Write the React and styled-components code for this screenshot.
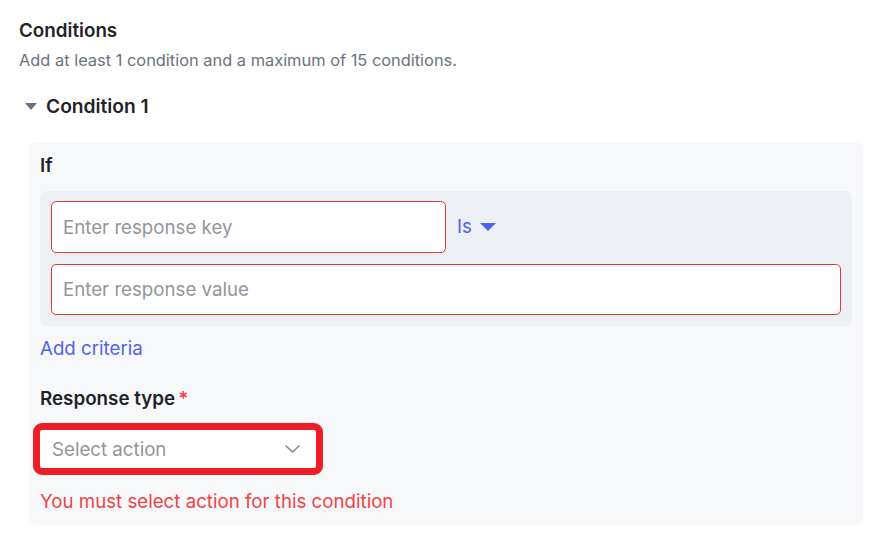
import React from "react";
import styled, { createGlobalStyle } from "styled-components";

const Global = createGlobalStyle`
  html, body { margin: 0; padding: 0; background: #ffffff; }
  body { font-family: Inter, "Noto Sans", "Liberation Sans", sans-serif; color: #1f2329; }
  * { box-sizing: border-box; }
`;

const Page = styled.div`
  padding: 20px 27px 14px 19px;
  display: flex;
  flex-direction: column;
`;

const Title = styled.div`
  font-size: 18.8px;
  line-height: 22px;
  font-weight: 600;
  color: #1f2329;
`;

const Subtitle = styled.div`
  margin-top: 8px;
  font-size: 16.4px;
  line-height: 20px;
  color: #6b7280;
`;

const Toggle = styled.div`
  margin-top: 24px;
  padding-left: 6px;
  display: flex;
  align-items: center;
  gap: 9px;
  font-size: 19.2px;
  line-height: 24px;
  font-weight: 600;
  color: #1f2329;
`;

const Card = styled.div`
  margin-top: 24px;
  margin-left: 10px;
  background: #f7f8fa;
  border-radius: 8px;
  padding: 13px 11px 11px 11px;
  display: flex;
  flex-direction: column;
  align-items: flex-start;
`;

const Label = styled.div`
  font-size: 18.8px;
  line-height: 22px;
  font-weight: 600;
  color: #1f2329;
  margin-top: ${(p) => p.$mt || 0}px;
`;

const Star = styled.span`
  color: #ef4444;
  margin-left: 3px;
`;

const CriteriaBox = styled.div`
  align-self: stretch;
  margin-top: 14px;
  background: #eceff3;
  border-radius: 7px;
  padding: 10px 11px 11px 11px;
  display: flex;
  flex-direction: column;
  gap: 11px;
`;

const Row = styled.div`
  display: flex;
  align-items: center;
  gap: 11px;
`;

const Input = styled.input`
  width: ${(p) => p.$w || "100%"};
  height: ${(p) => p.$h || 52}px;
  border: 1px solid #e03a35;
  border-radius: 5px;
  background: #ffffff;
  padding: 0 11px;
  font-family: inherit;
  font-size: 18.7px;
  color: #1f2329;
  outline: none;
  &::placeholder { color: #92959b; }
`;

const Operator = styled.div`
  display: flex;
  align-items: center;
  gap: 8px;
  color: #5063e6;
  font-size: 18.7px;
  line-height: 24px;
`;

const Link = styled.div`
  margin-top: 11px;
  color: #5063e6;
  font-size: 18.7px;
  line-height: 24px;
`;

const Select = styled.div`
  margin-top: 20px;
  width: 276px;
  height: 38px;
  background: #fff;
  outline: 7px solid #ec1d25;
  border-radius: 2px;
  display: flex;
  align-items: center;
  justify-content: space-between;
  padding: 0 16px 0 12px;
  font-size: 18.7px;
  color: #92959b;
`;

const Error = styled.div`
  margin-top: 22px;
  font-size: 18.7px;
  line-height: 24px;
  color: #ef4444;
`;

export default function App() {
  return (
    <>
      <Global />
      <Page>
        <Title>Conditions</Title>
        <Subtitle>Add at least 1 condition and a maximum of 15 conditions.</Subtitle>
        <Toggle>
          <svg width="12" height="7" viewBox="0 0 12 7">
            <path d="M0 0 H12 L6 7 Z" fill="#6b7280" />
          </svg>
          Condition 1
        </Toggle>
        <Card>
          <Label>If</Label>
          <CriteriaBox>
            <Row>
              <Input $w="395px" placeholder="Enter response key" />
              <Operator>
                Is
                <svg width="16" height="8" viewBox="0 0 16 8">
                  <path d="M0 0 H16 L8 8 Z" fill="#5063e6" />
                </svg>
              </Operator>
            </Row>
            <Input $h={51} placeholder="Enter response value" />
          </CriteriaBox>
          <Link>Add criteria</Link>
          <Label $mt={27}>
            Response type<Star>*</Star>
          </Label>
          <Select>
            Select action
            <svg width="15" height="8" viewBox="0 0 15 8">
              <path d="M1 1 L7.5 7 L14 1" fill="none" stroke="#7b808a" strokeWidth="1.5" strokeLinecap="round" strokeLinejoin="round" />
            </svg>
          </Select>
          <Error>You must select action for this condition</Error>
        </Card>
      </Page>
    </>
  );
}
